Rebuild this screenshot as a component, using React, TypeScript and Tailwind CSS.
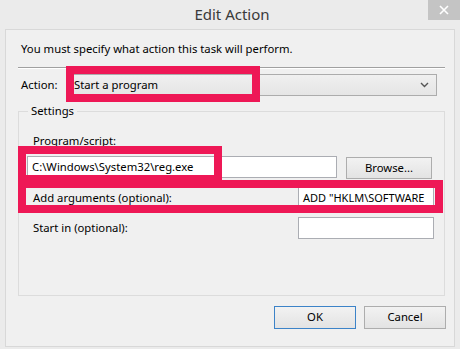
// Edit Action dialog (Windows 8 Task Scheduler) with pink highlight boxes

const pink = "border-[#ee1856]";

function Field({ className, text }: { className?: string; text?: string }) {
    return (
        <div
            className={`h-[22px] bg-white border border-[#abadb3] flex items-center px-[4px] text-[11.3px] whitespace-nowrap overflow-hidden ${className ?? ""}`}
        >
            {text}
        </div>
    );
}

function Button({ label, primary }: { label: string; primary?: boolean }) {
    return (
        <div
            className={`w-[82px] h-[23px] flex items-center justify-center text-[11.3px] bg-gradient-to-b from-[#f2f2f2] to-[#e3e3e3] border ${
                primary ? "border-[#3c83c8]" : "border-[#adadad]"
            }`}
        >
            {label}
        </div>
    );
}

export default function App() {
    return (
        <div
            className="relative w-[460px] h-[349px] bg-[#ebebeb] overflow-hidden text-black"
            style={{ fontFamily: '"Noto Sans", "Open Sans", sans-serif' }}
        >
            {/* 타이틀 바 */}
            <div className="h-[29px] flex items-center justify-center text-[15px] text-[#3a3a3a] pl-[4px]">
                Edit Action
            </div>
            <div className="absolute right-0 top-0 w-[32px] h-[20px] bg-[#c4c4c4] flex items-center justify-center">
                <svg width="10" height="10" viewBox="0 0 10 10">
                    <path d="M1 1 L9 9 M9 1 L1 9" stroke="white" strokeWidth="1.6" />
                </svg>
            </div>

            {/* 본문 */}
            <div className="mx-[5px] h-[318px] border border-[#d8d8d8] bg-[#f0f0f0] flex flex-col text-[11.3px]">
                <div className="pl-[15px] pt-[11px] leading-[16px]">
                    You must specify what action this task will perform.
                </div>
                <div className="ml-[12px] w-[427px] mt-[10px] border-t border-[#a0a0a0] border-b border-b-white" />

                {/* Action */}
                <div className="flex items-center mt-[5px] pl-[15px]">
                    <span className="w-[47px]">Action:</span>
                    <div className="w-[369px] h-[22px] border border-[#acacac] bg-gradient-to-b from-[#f0f0f0] to-[#e5e5e5] flex items-center justify-between pl-[5px] pr-[7px]">
                        <span>Start a program</span>
                        <svg width="9" height="6" viewBox="0 0 9 6">
                            <path d="M1 1 L4.5 4.5 L8 1" stroke="#555" strokeWidth="1.4" fill="none" />
                        </svg>
                    </div>
                </div>

                {/* Settings */}
                <fieldset className="ml-[12px] mt-[8px] w-[427px] h-[192px] border border-[#dcdcdc] px-[8px]">
                    <legend className="ml-[1px] px-[3px] leading-[14px]">Settings</legend>
                    <div className="pl-[6px] mt-[15px] leading-[16px]">Program/script:</div>
                    <div className="flex items-center mt-[6px]">
                        <Field className="w-[310px]" text="C:\Windows\System32\reg.exe" />
                        <div className="ml-[9px] mt-[2px] w-[86px] h-[22px] flex items-center justify-center bg-gradient-to-b from-[#f2f2f2] to-[#e3e3e3] border border-[#adadad]">
                            Browse...
                        </div>
                    </div>
                    <div className="flex items-center justify-between mt-[8px] pl-[6px] pr-[2px]">
                        <span>Add arguments (optional):</span>
                        <Field className="w-[136px] px-[3px] text-[11px]" text={'ADD "HKLM\\SOFTWARE'} />
                    </div>
                    <div className="flex items-center justify-between mt-[8px] pl-[6px] pr-[2px]">
                        <span>Start in (optional):</span>
                        <Field className="w-[136px]" />
                    </div>
                </fieldset>

                <div className="flex justify-end gap-[8px] mt-[10px] pr-[8px]">
                    <Button label="OK" primary />
                    <Button label="Cancel" />
                </div>
            </div>

            {/* 강조 박스 */}
            <div className={`absolute left-[66px] top-[66px] w-[194px] h-[36px] border-8 ${pink}`} />
            <div className={`absolute left-[18px] top-[146px] w-[204px] h-[37px] border-8 ${pink}`} />
            <div className={`absolute left-[18px] top-[180px] w-[425px] h-[33px] border-8 ${pink}`} />
        </div>
    );
}
